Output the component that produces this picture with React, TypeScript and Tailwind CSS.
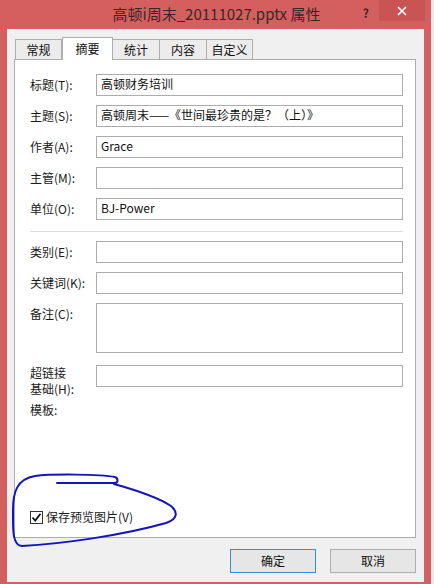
import React from "react";

const font = { fontFamily: '"Noto Sans CJK SC", "Noto Sans", sans-serif' };

function Field({ label, h = 22, value, twoLine }: { label: React.ReactNode; h?: number; value?: string; twoLine?: boolean }) {
  return (
    <div className="flex items-start">
      <div className={`w-[66px] text-[12px] text-[#1a1a1a] leading-[15px] ${twoLine ? "pt-[0px]" : "pt-[3px]"}`}>{label}</div>
      <div
        className="flex-1 border border-[#acacac] bg-white px-[4px] text-[12px] leading-[18px] text-[#111]"
        style={{ height: h }}
      >
        {value}
      </div>
    </div>
  );
}

export default function App() {
  return (
    <div className="relative w-[434px] h-[584px] bg-[#e9e9e9] overflow-hidden" style={font}>
      <div className="flex h-[584px] w-[431px] flex-col bg-[#d35f5f]">
        {/* title bar */}
        <div className="relative flex h-[29px] items-center justify-center">
          <div className="ml-[2px] text-[15px] text-[#3b2626]">高顿i周末_20111027.pptx 属性</div>
          <div className="absolute right-[62px] top-[4px] text-[12px] font-bold text-[#4a2020]">?</div>
          <div className="absolute right-[6px] top-0 flex h-[21px] w-[46px] items-center justify-center bg-[#c95454]">
            <svg width="10" height="10" viewBox="0 0 10 10">
              <path d="M1 1 L9 9 M9 1 L1 9" stroke="#fff" strokeWidth="1.6" />
            </svg>
          </div>
        </div>
        {/* client */}
        <div className="ml-[7px] mr-[7px] flex flex-1 flex-col bg-[#f0f0f0]">
          {/* tabs */}
          <div className="ml-[8px] mt-[8px] flex items-end text-[12px] text-[#111]">
            <div className="flex h-[20px] w-[47px] items-center justify-center border border-b-0 border-[#adadad] bg-[#ececec]">常规</div>
            <div className="relative z-10 -mb-[1px] flex h-[23px] w-[51px] items-start justify-center border border-b-0 border-[#adadad] bg-white pt-[2px]">摘要</div>
            <div className="flex h-[20px] w-[47px] items-center justify-center border border-b-0 border-l-0 border-[#adadad] bg-[#ececec]">统计</div>
            <div className="flex h-[20px] w-[47px] items-center justify-center border border-b-0 border-l-0 border-[#adadad] bg-[#ececec]">内容</div>
            <div className="flex h-[20px] w-[46px] items-center justify-center border border-b-0 border-l-0 border-[#adadad] bg-[#ececec]">自定义</div>
          </div>
          {/* panel */}
          <div className="ml-[7px] flex h-[479px] w-[402px] flex-col border border-[#adadad] bg-white pl-[15px] pr-[12px] pt-[14px]">
            <div className="flex flex-col gap-[9px]">
              <Field label="标题(T):" value="高顿财务培训" />
              <Field label="主题(S):" value="高顿周末——《世间最珍贵的是？（上）》" />
              <Field label="作者(A):" value="Grace" />
              <Field label="主管(M):" />
              <Field label="单位(O):" value="BJ-Power" />
            </div>
            <div className="mt-[11px] h-px bg-[#dcdcdc]" />
            <div className="mt-[9px] flex flex-col gap-[9px]">
              <Field label="类别(E):" />
              <Field label="关键词(K):" />
              <Field label="备注(C):" h={50} />
            </div>
            <div className="mt-[12px]">
              <Field
                twoLine
                label={
                  <div className="leading-[16px]">
                    超链接
                    <br />
                    基础(H):
                  </div>
                }
              />
            </div>
            <div className="mt-[4px] text-[12px] text-[#1a1a1a]">模板:</div>
            <div className="mt-[89px] flex items-center gap-[3px] text-[12px] text-[#1a1a1a]">
              <div className="flex h-[13px] w-[13px] items-center justify-center border border-[#333] bg-white">
                <svg width="11" height="11" viewBox="0 0 11 11">
                  <path d="M1.5 5.5 L4.2 8.5 L9.5 1.8" stroke="#111" strokeWidth="1.8" fill="none" />
                </svg>
              </div>
              <span>保存预览图片(V)</span>
            </div>
          </div>
          {/* buttons */}
          <div className="mt-[11px] flex justify-end gap-[14px] pr-[8px]">
            <div className="flex h-[24px] w-[86px] items-center justify-center border border-[#3c8bd2] bg-[#e6e6e6] text-[12px] text-[#111]">确定</div>
            <div className="flex h-[24px] w-[86px] items-center justify-center border border-[#adadad] bg-[#e6e6e6] text-[12px] text-[#111]">取消</div>
          </div>
        </div>
        <div className="h-[2px]" />
      </div>
      {/* hand-drawn annotation */}
      <svg className="pointer-events-none absolute left-0 top-0" width="434" height="584" viewBox="0 0 434 584">
        <path
          d="M57 483 L114 483 C119 483 118 478 115 477 C100 474 50 474 35 476 C17 479 13 492 13 510 C13 528 12 546 22 546 C60 544 120 536 166 523 C178 519 178 512 171 506 C156 496 132 489 114 484"
          stroke="#1414b8"
          strokeWidth="2"
          fill="none"
          strokeLinecap="round"
        />
      </svg>
    </div>
  );
}
